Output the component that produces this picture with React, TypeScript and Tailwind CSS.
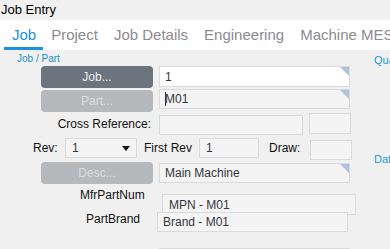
import React from "react"

const Corner = () => (
  <span className="absolute right-0 top-0 w-[9px] h-[9px] bg-[#aec3df] [clip-path:polygon(0_0,100%_0,100%_100%)]" />
)

type FieldProps = {
  value?: string
  className: string
  white?: boolean
  corner?: boolean
  caret?: boolean
}

const Field = ({ value, className, white, corner, caret }: FieldProps) => (
  <div
    className={`relative shrink-0 border border-[#dadada] flex items-center text-[12px] text-[#35353f] ${
      white ? "bg-white" : "bg-[#f4f4f4]"
    } ${className}`}
  >
    {caret && <span className="w-px h-[14px] bg-[#2a2a40] -mr-px" />}
    {value}
    {corner && <Corner />}
  </div>
)

const tabs = ["Job", "Project", "Job Details", "Engineering", "Machine MES"]

export default function App() {
  return (
    <div className="w-[390px] h-[249px] overflow-hidden bg-[#f0f0f0] font-['Liberation_Sans',Arial,sans-serif] text-[#111]">
      {/* title */}
      <div className="h-[20px] pl-[1px] text-[13px] leading-[20px] text-black">Job Entry</div>

      {/* tabs */}
      <div className="h-[30px] bg-white flex whitespace-nowrap overflow-hidden">
        {tabs.map((t, i) => (
          <div
            key={t}
            className={`shrink-0 px-[8px] text-[15px] leading-[29px] h-[30px] ${
              i === 0 ? "ml-[4px] text-[#1e8fe3] border-b-[3px] border-[#1e8fe3] leading-[27px] pl-[8px] pr-[7px]" : "text-[#8d8a90]"
            }`}
          >
            {t}
          </div>
        ))}
      </div>

      <div className="flex">
        {/* form */}
        <div className="w-[374px] shrink-0">
          <div className="pl-[17px] pt-[3px] text-[10px] leading-[12px] text-[#1b91c9]">Job / Part</div>

          {/* Job */}
          <div className="flex items-start gap-[6px] pl-[41px] mt-[1px]">
            <button className="w-[112px] h-[22px] rounded-[4px] bg-[#6c757d] text-[12px] text-[#eef0f2]">Job...</button>
            <Field value="1" white corner className="w-[191px] h-[21px] pl-[5px]" />
          </div>

          {/* Part */}
          <div className="flex items-start gap-[6px] pl-[41px] mt-[2px]">
            <button className="w-[112px] h-[22px] rounded-[4px] bg-[#b5b9bc] text-[12px] text-[#dadddf]">Part...</button>
            <Field value="M01" caret corner className="w-[191px] h-[20px] -mt-px pl-[5px]" />
          </div>

          {/* Cross reference */}
          <div className="flex items-start mt-[1px] pl-[41px]">
            <div className="w-[112px] pr-[2px] text-right text-[12px] leading-[21px] mt-[1px]">Cross Reference:</div>
            <Field className="w-[144px] h-[20px] ml-[6px] mt-[2px]" />
            <Field className="w-[42px] h-[21px] ml-[6px]" />
          </div>

          {/* Rev */}
          <div className="flex items-start mt-[3px] pl-[33px]">
            <div className="w-[32px] text-[12px] leading-[20px]">Rev:</div>
            <div className="relative w-[72px] h-[20px] border border-[#dadada] bg-[#f4f4f4] flex items-center pl-[6px] text-[12px] text-[#35353f]">
              1
              <span className="absolute right-[6px] top-[7px] w-0 h-0 border-l-[4px] border-r-[4px] border-t-[5px] border-l-transparent border-r-transparent border-t-[#111]" />
            </div>
            <div className="ml-[7px] w-[55px] text-[12px] leading-[20px]">First Rev</div>
            <Field value="1" className="w-[60px] h-[20px] pl-[6px]" />
            <div className="ml-[10px] w-[41px] text-[12px] leading-[20px]">Draw:</div>
            <Field className="w-[42px] h-[20px] mt-[2px]" />
          </div>

          {/* Desc */}
          <div className="flex items-start gap-[6px] pl-[41px] mt-[2px]">
            <button className="w-[112px] h-[22px] rounded-[4px] bg-[#b5b9bc] text-[12px] text-[#dadddf]">Desc...</button>
            <Field value="Main Machine" corner className="w-[191px] h-[20px] mt-px pl-[5px]" />
          </div>

          {/* MfrPartNum */}
          <div className="flex items-start mt-[3px]">
            <div className="ml-[80px] w-[76px] text-[12px] leading-[16px]">MfrPartNum</div>
            <Field value="MPN - M01" className="w-[194px] h-[21px] ml-[6px] mt-[7px] pl-[6px]" />
          </div>

          {/* PartBrand */}
          <div className="flex items-start -mt-[3px]">
            <div className="ml-[86px] w-[65px] text-[12px] leading-[14px]">PartBrand</div>
            <Field value="Brand - M01" className="w-[191px] h-[20px] ml-[6px] pl-[5px]" />
          </div>

          <div className="flex mt-[16px] pl-[159px]">
            <Field className="w-[191px] h-[20px]" />
          </div>
        </div>

        {/* next column, cut off */}
        <div className="flex flex-col text-[11px] text-[#1b9bd0] whitespace-nowrap">
          <div className="mt-[4px] leading-[12px]">Quantity</div>
          <div className="mt-[87px] leading-[12px]">Dates</div>
        </div>
      </div>
    </div>
  )
}
